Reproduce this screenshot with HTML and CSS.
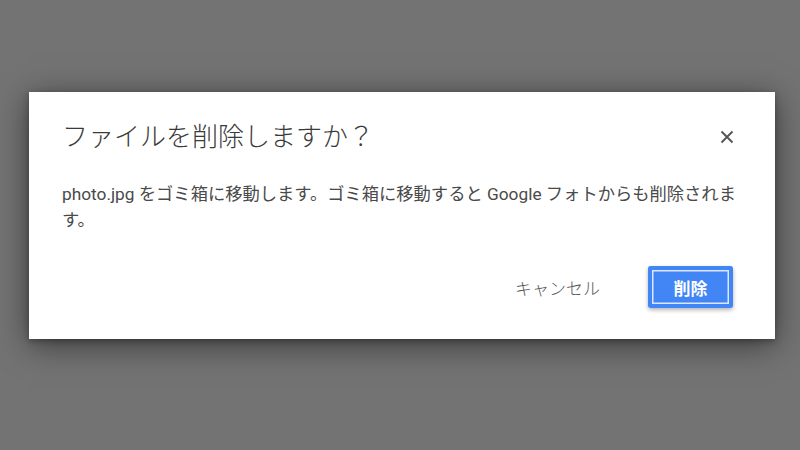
FILE: index.html
```html
<!DOCTYPE html>
<html lang="ja">
<head>
<meta charset="utf-8">
<title>ファイルを削除しますか？</title>
<link rel="stylesheet" href="styles.css">
</head>
<body>
<div class="stage">
  <div class="dialog" role="dialog">
    <div class="header">
      <h1 class="title">ファイルを削除しますか？</h1>
      <button class="close" aria-label="閉じる">
        <svg width="14" height="14" viewBox="0 0 14 14"><path d="M1.5 1.5 L12.5 12.5 M12.5 1.5 L1.5 12.5" stroke="#555" stroke-width="1.9" fill="none"/></svg>
      </button>
    </div>
    <p class="message">photo.jpg をゴミ箱に移動します。ゴミ箱に移動すると Google フォトからも削除されます。</p>
    <div class="footer">
      <button class="btn-cancel">キャンセル</button>
      <button class="btn-delete">削除</button>
    </div>
  </div>
</div>
</body>
</html>
```
FILE: styles.css
```css
html, body {
  margin: 0;
  padding: 0;
}
body {
  width: 800px;
  height: 450px;
  background: #737373;
  overflow: hidden;
  font-family: Roboto, "Noto Sans CJK JP", sans-serif;
}
.stage {
  padding: 92px 0 0 29px;
}
.dialog {
  box-sizing: border-box;
  width: 746px;
  height: 247px;
  background: #ffffff;
  box-shadow: 0 6px 30px rgba(0, 0, 0, 0.5), 0 2px 6px rgba(0, 0, 0, 0.3);
  padding: 27px 36px 0 33px;
  display: flex;
  flex-direction: column;
}
.header {
  display: flex;
  align-items: center;
  justify-content: space-between;
  height: 36px;
}
.title {
  margin: 0;
  font-size: 26px;
  line-height: 36px;
  font-weight: 300;
  color: #3a3a3a;
  font-family: Roboto, "Noto Sans CJK JP", sans-serif;
}
.close {
  width: 24px;
  height: 24px;
  padding: 0;
  border: none;
  background: transparent;
  display: flex;
  align-items: center;
  justify-content: center;
}
.message {
  margin: 26px 0 0 0;
  width: 682px;
  font-size: 17.3px;
  line-height: 26px;
  color: #4a4a4a;
}
.footer {
  margin-top: 33px;
  display: flex;
  justify-content: flex-end;
  align-items: center;
  padding-right: 6px;
}
.btn-cancel {
  border: none;
  background: transparent;
  font-family: Roboto, "Noto Sans CJK JP", sans-serif;
  font-size: 17px;
  font-weight: 300;
  color: #555555;
  padding: 0 16px;
  height: 42px;
  margin-right: 32px;
}
.btn-delete {
  width: 85px;
  height: 42px;
  border: none;
  border-radius: 3px;
  background: #4285f4;
  color: #ffffff;
  font-family: Roboto, "Noto Sans CJK JP", sans-serif;
  font-size: 17px;
  font-weight: 700;
  box-shadow: inset 0 0 0 4px #4285f4, inset 0 0 0 5.5px #dbe7fd, 0 2px 4px rgba(0, 0, 0, 0.3);
}
```
